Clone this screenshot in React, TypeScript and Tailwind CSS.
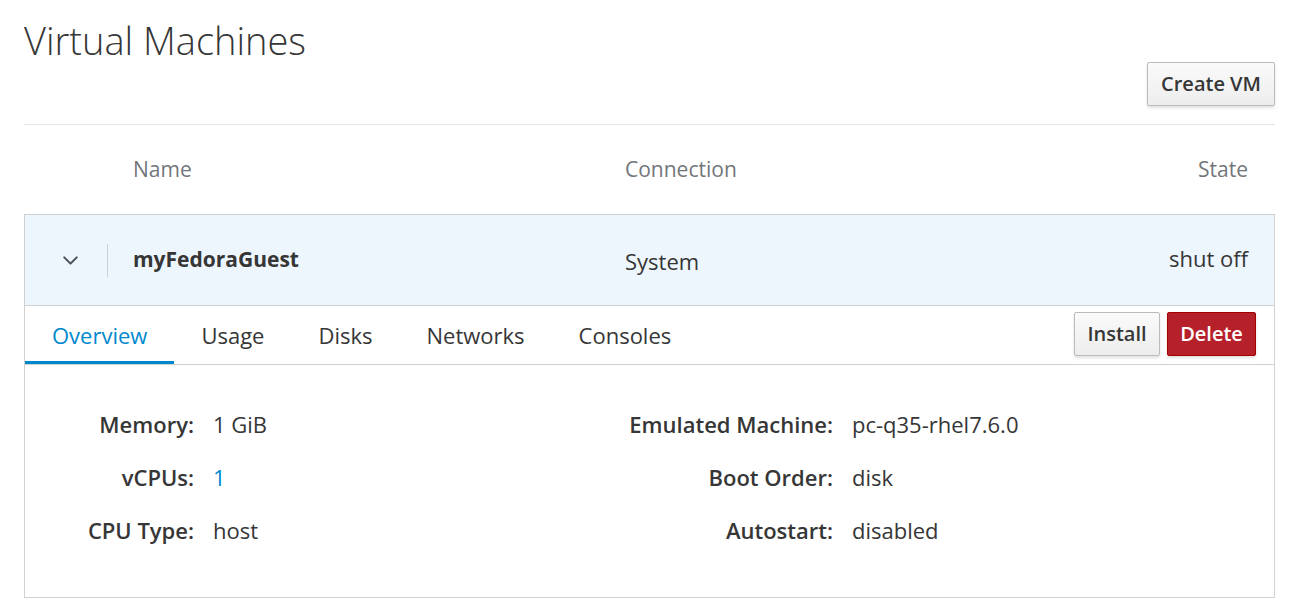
import { ChevronDown } from 'lucide-react'

const TABS = ['Overview', 'Usage', 'Disks', 'Networks', 'Consoles']

const LEFT_DETAILS = [
  { label: 'Memory:', value: '1 GiB' },
  { label: 'vCPUs:', value: '1', link: true },
  { label: 'CPU Type:', value: 'host' },
]

const RIGHT_DETAILS = [
  { label: 'Emulated Machine:', value: 'pc-q35-rhel7.6.0' },
  { label: 'Boot Order:', value: 'disk' },
  { label: 'Autostart:', value: 'disabled' },
]

function DetailRow({
  label,
  value,
  link,
  labelWidth,
}: {
  label: string
  value: string
  link?: boolean
  labelWidth: string
}) {
  return (
    <div className="flex h-[53px] items-center">
      <span className={`${labelWidth} text-right font-semibold text-[#363636]`}>{label}</span>
      <span className={`ml-[19px] ${link ? 'text-[#0088ce]' : 'text-[#363636]'}`}>{value}</span>
    </div>
  )
}

export default function App() {
  return (
    <div
      className="min-h-[608px] bg-white pl-6 pr-[30px] text-[22px] text-[#363636]"
      style={{ fontFamily: '"Open Sans", "Liberation Sans", sans-serif' }}
    >
      {/* Page title + toolbar */}
      <h1 className="pt-[18px] text-[38px] font-light leading-[44px] text-[#363636]">
        Virtual Machines
      </h1>
      <div className="flex justify-end">
        <button className="h-[44px] rounded-[2px] border border-[#bbbbbb] bg-gradient-to-b from-[#fafafa] to-[#ededed] px-[13px] text-[20px] font-semibold text-[#363636] shadow-[0_2px_3px_rgba(0,0,0,0.12)]">
          Create VM
        </button>
      </div>
      <div className="mt-[18px] border-b border-[#e5e5e5]" />

      {/* Column headers */}
      <div className="grid h-[89px] grid-cols-[109px_492px_1fr] items-center pr-[27px] text-[21px] text-[#72767b]">
        <span />
        <span>Name</span>
        <div className="flex justify-between">
          <span>Connection</span>
          <span>State</span>
        </div>
      </div>

      {/* VM card */}
      <div className="border border-[#d1d1d1]">
        <div className="grid h-[91px] grid-cols-[108px_492px_1fr] items-center border-b border-[#d1d1d1] bg-[#edf5fd] pr-[26px]">
          <div className="flex h-full items-center">
            <ChevronDown className="ml-[33px] h-[25px] w-[25px] text-[#4d5258]" strokeWidth={2} />
            <div className="ml-[24px] h-[33px] w-px bg-[#d1d1d1]" />
          </div>
          <span className="text-[21px] font-bold text-[#363636]">myFedoraGuest</span>
          <div className="flex justify-between">
            <span className="pt-[3px]">System</span>
            <span>shut off</span>
          </div>
        </div>

        {/* Tabs */}
        <div className="flex h-[59px] items-stretch border-b border-[#d1d1d1] pr-[18px]">
          {TABS.map((tab, i) => (
            <div
              key={tab}
              className={`flex items-center px-[27px] ${
                i === 0 ? 'border-b-[3px] border-[#0088ce] pt-[3px] text-[#0088ce]' : 'text-[#363636]'
              }`}
            >
              {tab}
            </div>
          ))}
          <div className="ml-auto flex items-start gap-[7px] pt-[6px]">
            <button className="h-[44px] w-[86px] rounded-[2px] border border-[#bbbbbb] bg-gradient-to-b from-[#fafafa] to-[#ededed] text-[20px] font-semibold text-[#363636] shadow-[0_2px_3px_rgba(0,0,0,0.12)]">
              Install
            </button>
            <button className="h-[44px] w-[89px] rounded-[2px] border border-[#a30000] bg-[#b5202a] text-[20px] font-semibold text-white shadow-[0_2px_3px_rgba(0,0,0,0.12)]">
              Delete
            </button>
          </div>
        </div>

        {/* Overview details */}
        <div className="flex pb-[40px] pt-[33px]">
          <div className="w-[600px]">
            {LEFT_DETAILS.map((d) => (
              <DetailRow key={d.label} {...d} labelWidth="w-[169px]" />
            ))}
          </div>
          <div>
            {RIGHT_DETAILS.map((d) => (
              <DetailRow key={d.label} {...d} labelWidth="w-[208px]" />
            ))}
          </div>
        </div>
      </div>
    </div>
  )
}
